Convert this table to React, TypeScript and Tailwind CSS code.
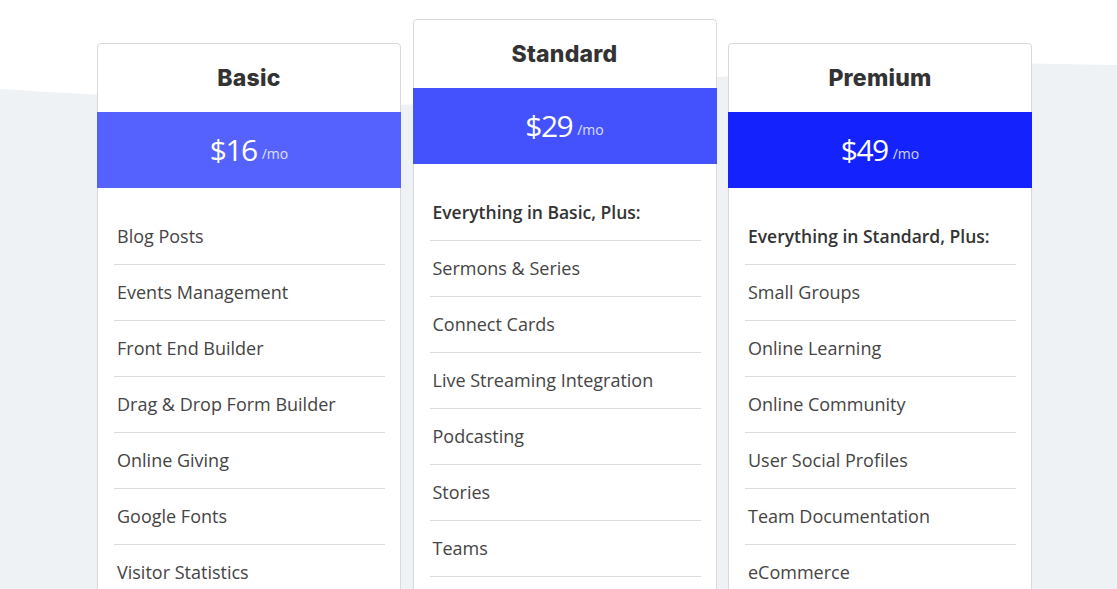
import React from "react";

interface Plan {
  name: string;
  price: string;
  band: string;
  raised?: boolean;
  heading?: string;
  features: string[];
}

const plans: Plan[] = [
  {
    name: "Basic",
    price: "$16",
    band: "bg-[#5562fe]",
    features: [
      "Blog Posts",
      "Events Management",
      "Front End Builder",
      "Drag & Drop Form Builder",
      "Online Giving",
      "Google Fonts",
      "Visitor Statistics",
    ],
  },
  {
    name: "Standard",
    price: "$29",
    band: "bg-[#4452fe]",
    raised: true,
    heading: "Everything in Basic, Plus:",
    features: [
      "Sermons & Series",
      "Connect Cards",
      "Live Streaming Integration",
      "Podcasting",
      "Stories",
      "Teams",
    ],
  },
  {
    name: "Premium",
    price: "$49",
    band: "bg-[#1422fe]",
    heading: "Everything in Standard, Plus:",
    features: [
      "Small Groups",
      "Online Learning",
      "Online Community",
      "User Social Profiles",
      "Team Documentation",
      "eCommerce",
    ],
  },
];

function PlanCard({ plan }: { plan: Plan }) {
  return (
    <div
      className={`w-[304px] min-h-[640px] shrink-0 bg-white border border-[#d9d9d9] rounded-[4px] ${
        plan.raised ? "mt-[19px]" : "mt-[43px]"
      }`}
    >
      {/* Title */}
      <div className="h-[68px] flex items-center justify-center pt-px">
        <h3 className="font-['Inter',sans-serif] font-extrabold text-[23px] tracking-[0.01em] text-[#333]">
          {plan.name}
        </h3>
      </div>

      {/* Price band */}
      <div className={`-mx-px h-[76px] flex items-center justify-center text-white ${plan.band}`}>
        <span className="font-['Open_Sans',sans-serif] text-[30px] leading-none tracking-[-0.05em]">
          {plan.price}
        </span>
        <span className="ml-[5px] mt-[6px] font-['Open_Sans',sans-serif] text-[14px] text-white/80">/mo</span>
      </div>

      {/* Features */}
      <ul className="pl-4 pr-[15px] pt-[21px] font-['Open_Sans',sans-serif]">
        {plan.heading && (
          <li className="h-[56px] flex items-center pl-[3px] border-b border-[#dcdcdc] text-[17.5px] font-semibold text-[#333]">
            {plan.heading}
          </li>
        )}
        {plan.features.map((f) => (
          <li
            key={f}
            className="h-[56px] flex items-center pl-[3px] border-b border-[#dcdcdc] text-[18px] text-[#444]"
          >
            {f}
          </li>
        ))}
      </ul>
    </div>
  );
}

export default function App() {
  return (
    <div className="relative w-full h-[589px] overflow-hidden bg-white">
      {/* Background wave */}
      <svg
        className="absolute left-0 top-0 w-[1117px] h-[589px]"
        viewBox="0 0 1117 589"
        preserveAspectRatio="none"
      >
        <path
          d="M0 89 C 180 100, 330 108, 420 104 C 540 92, 680 74, 1000 63 L 1117 65 L 1117 589 L 0 589 Z"
          fill="#eff2f5"
        />
      </svg>

      <div className="relative flex items-start gap-[11.5px] pl-[97px]">
        {plans.map((p) => (
          <PlanCard key={p.name} plan={p} />
        ))}
      </div>
    </div>
  );
}
